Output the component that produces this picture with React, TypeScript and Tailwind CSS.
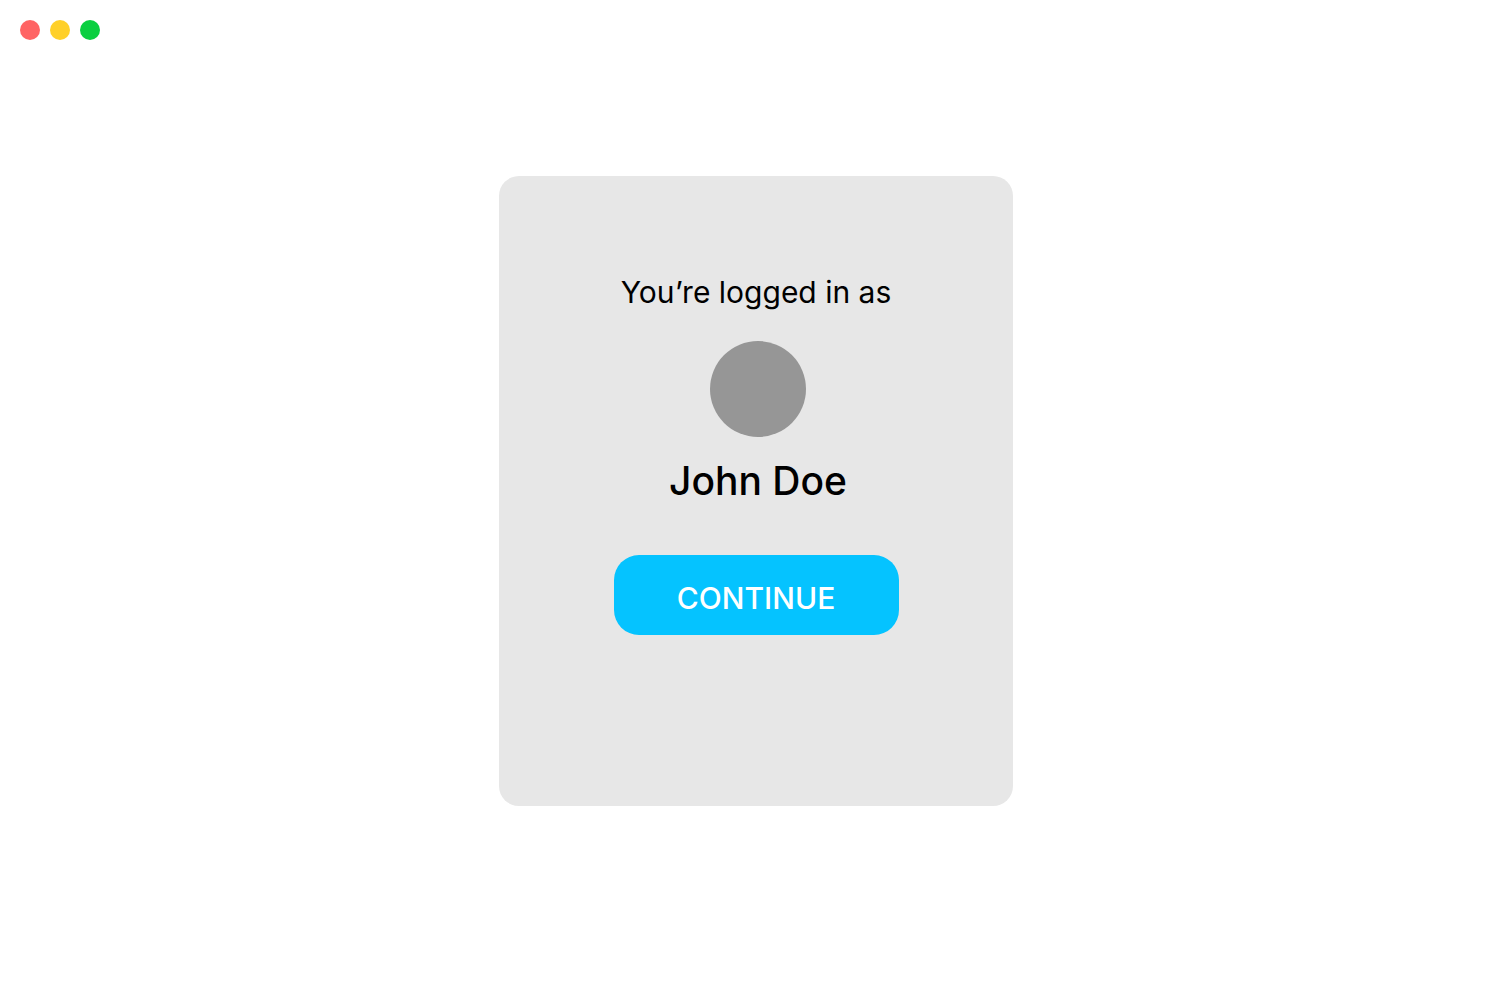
export default function App() {
  return (
    <div className="flex min-h-screen flex-col bg-white font-['Inter',sans-serif] text-black">
      <header className="flex h-15 items-center gap-2.5 px-5">
        <button type="button" aria-label="Close" className="size-5 rounded-full bg-[#ff6464]" />
        <button type="button" aria-label="Minimize" className="size-5 rounded-full bg-[#ffd029]" />
        <button type="button" aria-label="Zoom" className="size-5 rounded-full bg-[#0acf40]" />
      </header>
      <main className="flex flex-1 flex-col items-center justify-center pb-15">
        <section className="flex w-full max-w-[514px] flex-col items-center rounded-[20px] bg-[#e7e7e7] px-6 pt-24 pb-[171px]">
          <p className="text-[30px] leading-10">You’re logged in as</p>
          <div className="mt-[29px] flex flex-col items-center gap-5 pl-1">
            <div className="size-24 rounded-full bg-[#969696]" />
            <h1 className="text-[39px] leading-12 font-medium">John Doe</h1>
          </div>
          <button
            type="button"
            className="mt-[50px] h-20 w-full max-w-[285px] rounded-[25px] bg-[#05c3ff] pt-1.5 text-[30px] font-medium text-white"
          >
            CONTINUE
          </button>
        </section>
      </main>
    </div>
  );
}
